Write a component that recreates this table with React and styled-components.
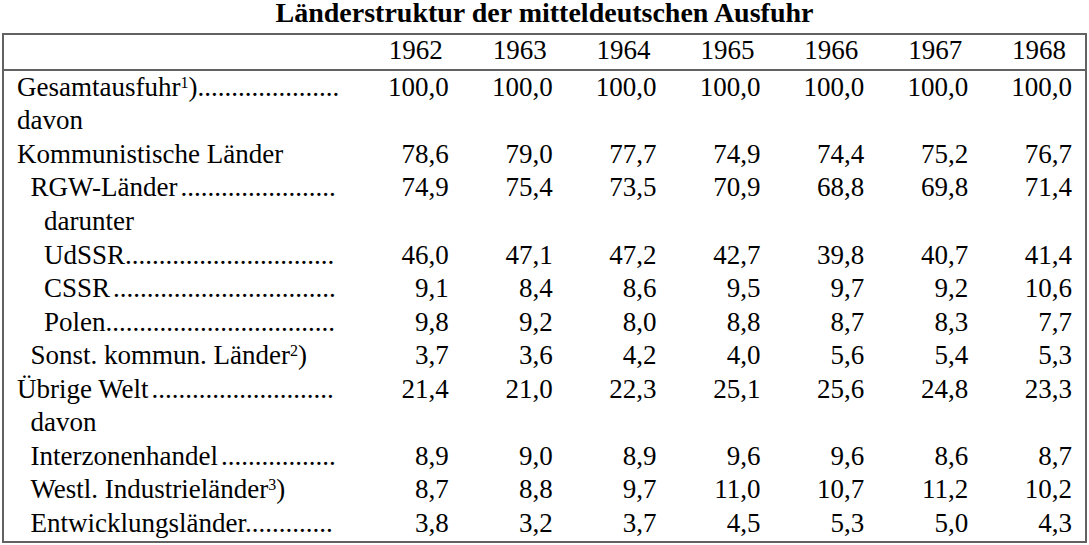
import React from "react";
import styled, { createGlobalStyle } from "styled-components";

const years = ["1962", "1963", "1964", "1965", "1966", "1967", "1968"];

// dots: number of leader dots, gap: a small space before them as in the print
const rows = [
  { label: "Gesamtausfuhr", note: "1", level: 0, dots: 21, values: ["100,0", "100,0", "100,0", "100,0", "100,0", "100,0", "100,0"] },
  { label: "davon", level: 0 },
  { label: "Kommunistische Länder", level: 0, values: ["78,6", "79,0", "77,7", "74,9", "74,4", "75,2", "76,7"] },
  { label: "RGW-Länder", level: 1, dots: 23, gap: true, values: ["74,9", "75,4", "73,5", "70,9", "68,8", "69,8", "71,4"] },
  { label: "darunter", level: 2 },
  { label: "UdSSR", level: 2, dots: 31, values: ["46,0", "47,1", "47,2", "42,7", "39,8", "40,7", "41,4"] },
  { label: "CSSR", level: 2, dots: 33, gap: true, values: ["9,1", "8,4", "8,6", "9,5", "9,7", "9,2", "10,6"] },
  { label: "Polen", level: 2, dots: 34, values: ["9,8", "9,2", "8,0", "8,8", "8,7", "8,3", "7,7"] },
  { label: "Sonst. kommun. Länder", note: "2", level: 1, values: ["3,7", "3,6", "4,2", "4,0", "5,6", "5,4", "5,3"] },
  { label: "Übrige Welt", level: 0, dots: 27, gap: true, values: ["21,4", "21,0", "22,3", "25,1", "25,6", "24,8", "23,3"] },
  { label: "davon", level: 1 },
  { label: "Interzonenhandel", level: 1, dots: 17, gap: true, values: ["8,9", "9,0", "8,9", "9,6", "9,6", "8,6", "8,7"] },
  { label: "Westl. Industrieländer", note: "3", level: 1, values: ["8,7", "8,8", "9,7", "11,0", "10,7", "11,2", "10,2"] },
  { label: "Entwicklungsländer", level: 1, dots: 13, values: ["3,8", "3,2", "3,7", "4,5", "5,3", "5,0", "4,3"] },
];

const GlobalStyle = createGlobalStyle`
  html, body {
    margin: 0;
    padding: 0;
    background: #fff;
  }
  body {
    font-family: "Liberation Serif", "Times New Roman", serif;
    color: #000;
  }
`;

const Page = styled.div`
  width: 1089px;
  height: 545px;
  overflow: hidden;
`;

const Title = styled.h1`
  margin: -2px 0 5px;
  font-size: 28px;
  line-height: 30px;
  font-weight: bold;
  text-align: center;
`;

const Table = styled.div`
  box-sizing: border-box;
  margin-left: 2px;
  width: 1085px;
  border: 2px solid #626262;
`;

const Row = styled.div`
  box-sizing: border-box;
  display: grid;
  grid-template-columns: 354px repeat(7, 1fr);
  height: ${(p) => (p.$head ? "36px" : "33.55px")};
  padding-bottom: ${(p) => (p.$head ? "6px" : "2px")};
  align-items: center;
  font-size: 27px;
  line-height: 30px;
  border-bottom: ${(p) => (p.$head ? "2px solid #626262" : "none")};
`;

const Label = styled.div`
  padding-left: ${(p) => 13 + p.$level * 13.5}px;
  white-space: nowrap;
`;

const Sup = styled.span`
  font-size: 16px;
  vertical-align: 8px;
  line-height: 0;
`;

const Leader = styled.span`
  margin-left: ${(p) => (p.$gap ? "3px" : "0")};
`;

const Cell = styled.div`
  text-align: right;
  padding-right: ${(p) => (p.$head ? "19px" : "13px")};
`;

export default function App() {
  return (
    <Page>
      <GlobalStyle />
      <Title>Länderstruktur der mitteldeutschen Ausfuhr</Title>
      <Table>
        <Row $head>
          <Label $level={0} />
          {years.map((y) => (
            <Cell key={y} $head>
              {y}
            </Cell>
          ))}
        </Row>
        {rows.map((r, i) => (
          <Row key={i}>
            <Label $level={r.level}>
              {r.label}
              {r.note && (
                <>
                  <Sup>{r.note}</Sup>)
                </>
              )}
              {r.dots && <Leader $gap={r.gap}>{".".repeat(r.dots)}</Leader>}
            </Label>
            {(r.values || years.map(() => "")).map((v, j) => (
              <Cell key={j}>{v}</Cell>
            ))}
          </Row>
        ))}
      </Table>
    </Page>
  );
}
